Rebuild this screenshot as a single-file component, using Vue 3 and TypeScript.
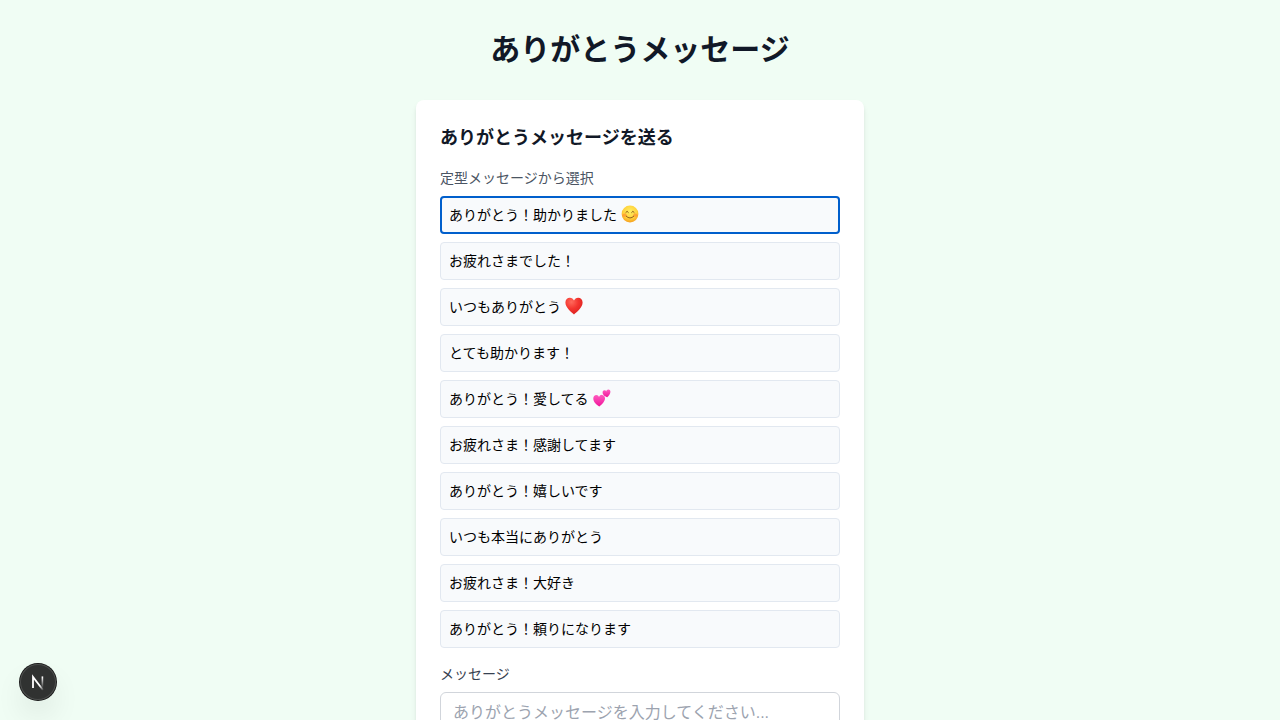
<script setup lang="ts">
import { ref } from 'vue'

type Emoji = 'smile' | 'heart' | 'hearts'

interface Preset {
  text: string
  emoji?: Emoji
}

const presets: Preset[] = [
  { text: 'ありがとう！助かりました', emoji: 'smile' },
  { text: 'お疲れさまでした！' },
  { text: 'いつもありがとう', emoji: 'heart' },
  { text: 'とても助かります！' },
  { text: 'ありがとう！愛してる', emoji: 'hearts' },
  { text: 'お疲れさま！感謝してます' },
  { text: 'ありがとう！嬉しいです' },
  { text: 'いつも本当にありがとう' },
  { text: 'お疲れさま！大好き' },
  { text: 'ありがとう！頼りになります' },
]

const selected = ref(0)
const message = ref('')

function choose(index: number) {
  selected.value = index
  message.value = presets[index].text
}
</script>

<template>
  <main class="page">
    <h1 class="title">ありがとうメッセージ</h1>

    <section class="card">
      <h2 class="heading">ありがとうメッセージを送る</h2>

      <p id="preset-label" class="hint">定型メッセージから選択</p>
      <div class="presets" role="group" aria-labelledby="preset-label">
        <button
          v-for="(preset, index) in presets"
          :key="preset.text"
          type="button"
          class="preset"
          :class="{ active: index === selected }"
          @click="choose(index)"
        >
          <span>{{ preset.text }}</span>
          <svg v-if="preset.emoji === 'smile'" class="emoji" viewBox="0 0 18 18" aria-hidden="true">
            <defs>
              <radialGradient id="face" cx="0.5" cy="0.35" r="0.68">
                <stop offset="0" stop-color="#ffee62" />
                <stop offset="0.6" stop-color="#ffd23c" />
                <stop offset="1" stop-color="#f59a1c" />
              </radialGradient>
            </defs>
            <circle cx="9" cy="9" r="8.4" fill="url(#face)" />
            <ellipse cx="3.6" cy="10.2" rx="2.2" ry="1.6" fill="#ff7a2e" opacity="0.5" />
            <ellipse cx="14.4" cy="10.2" rx="2.2" ry="1.6" fill="#ff7a2e" opacity="0.5" />
            <path d="M4.8 7.4Q6.1 4.9 7.4 7.4M10.6 7.4Q11.9 4.9 13.2 7.4" fill="none" stroke="#7a4a14" stroke-width="0.9" stroke-linecap="round" />
            <path d="M5.2 11.2Q9 15 12.8 11.2" fill="none" stroke="#86501a" stroke-width="0.9" stroke-linecap="round" />
          </svg>
          <svg v-else-if="preset.emoji === 'heart'" class="emoji" viewBox="0 0 18 18" aria-hidden="true">
            <defs>
              <radialGradient id="red" cx="0.35" cy="0.25" r="0.8">
                <stop offset="0" stop-color="#ff6a5c" />
                <stop offset="0.5" stop-color="#f4352f" />
                <stop offset="1" stop-color="#d91f1f" />
              </radialGradient>
            </defs>
            <path d="M9 17.6C6.8 15.2 .4 11 .4 5.5C.4 2.6 2.4 .7 4.8 .7C6.8 .7 8.3 1.8 9 3.6C9.7 1.8 11.2 .7 13.2 .7C15.6 .7 17.6 2.6 17.6 5.5C17.6 11 11.2 15.2 9 17.6Z" fill="url(#red)" />
          </svg>
          <svg v-else-if="preset.emoji === 'hearts'" class="emoji" viewBox="0 0 18 18" aria-hidden="true">
            <defs>
              <linearGradient id="pink" x1="0" y1="0" x2="0" y2="1">
                <stop offset="0" stop-color="#ff5cc0" />
                <stop offset="1" stop-color="#f0149a" />
              </linearGradient>
            </defs>
            <path d="M6.4 17.5C4.3 16.4 .3 13.4 .3 9.5C.3 7.3 1.6 5.9 3.3 5.9C4.7 5.9 5.6 6.7 6 7.9C6.7 6.5 7.9 5.7 9.3 5.9C11.2 6.1 12.2 7.7 12 9.7C11.6 13 8.4 15.8 6.4 17.5Z" fill="url(#pink)" />
            <path d="M14.2 8.2C12.6 7.6 9.6 6.3 9.6 3.5C9.6 2.1 10.4 1.3 11.5 1.3C12.4 1.3 12.9 1.8 13.2 2.5C13.5 1.3 14.3 .6 15.4 .6C16.8 .6 17.5 1.6 17.4 3C17.3 5.2 15.6 7 14.2 8.2Z" fill="url(#pink)" />
          </svg>
        </button>
      </div>

      <label class="label" for="message">メッセージ</label>
      <textarea
        id="message"
        v-model="message"
        class="message"
        rows="4"
        placeholder="ありがとうメッセージを入力してください..."
      ></textarea>
    </section>

    <button type="button" class="dev-badge" aria-label="Next.js">
      <svg viewBox="0 0 36 36" aria-hidden="true">
        <defs>
          <linearGradient id="diagonal" gradientUnits="userSpaceOnUse" x1="18" y1="18" x2="24" y2="26">
            <stop offset="0.4" stop-color="#fff" />
            <stop offset="1" stop-color="#fff" stop-opacity="0" />
          </linearGradient>
          <linearGradient id="stem" gradientUnits="userSpaceOnUse" x1="22" y1="13" x2="22" y2="24">
            <stop offset="0" stop-color="#fff" />
            <stop offset="1" stop-color="#fff" stop-opacity="0" />
          </linearGradient>
        </defs>
        <path d="M13 24V13L23 26" fill="none" stroke="url(#diagonal)" stroke-width="1.8" />
        <path d="M22.4 12.4V24" fill="none" stroke="url(#stem)" stroke-width="1.6" />
      </svg>
    </button>
  </main>
</template>

<style>
body {
  margin: 0;
  background: #f0fdf4;
}
</style>

<style scoped>
.page {
  box-sizing: border-box;
  min-height: 100vh;
  padding: 32px 16px;
  background: #f0fdf4;
  color: #111827;
  font-family: "Liberation Sans", "Noto Sans CJK JP", sans-serif;
}

.title {
  margin: 0 0 32px;
  font-size: 30px;
  line-height: 36px;
  font-weight: 700;
  text-align: center;
}

.card {
  box-sizing: border-box;
  max-width: 448px;
  margin: 0 auto;
  padding: 24px;
  border-radius: 8px;
  background: #fff;
  box-shadow: 0 4px 6px -1px rgba(0, 0, 0, 0.1), 0 2px 4px -2px rgba(0, 0, 0, 0.1);
}

.heading {
  margin: 0 0 16px;
  font-size: 18px;
  line-height: 28px;
  font-weight: 700;
}

.hint {
  margin: 0 0 8px;
  color: #4b5563;
  font-size: 14px;
  line-height: 20px;
}

.presets {
  display: grid;
  gap: 8px;
  margin-bottom: 16px;
}

.preset {
  display: flex;
  align-items: center;
  gap: 4px;
  width: 100%;
  padding: 8px;
  border: 1px solid #e2e8f0;
  border-radius: 4px;
  background: #f8fafc;
  color: #000;
  font-family: inherit;
  font-size: 14px;
  line-height: 20px;
  text-align: left;
  cursor: pointer;
}

.preset.active {
  outline: 2px solid #005fcc;
  outline-offset: -2px;
}

.emoji {
  flex: none;
  width: 18px;
  height: 18px;
  margin-bottom: 2px;
}

.label {
  display: block;
  margin-bottom: 8px;
  color: #374151;
  font-size: 14px;
  line-height: 20px;
}

.message {
  display: block;
  box-sizing: border-box;
  width: 100%;
  padding: 8px 12px;
  border: 1px solid #d1d5db;
  border-radius: 6px;
  background: #fff;
  color: #111827;
  font-family: inherit;
  font-size: 16px;
  line-height: 24px;
  resize: none;
}

.message::placeholder {
  color: #9ca3af;
  opacity: 1;
}

.dev-badge {
  position: fixed;
  bottom: 20px;
  left: 20px;
  width: 36px;
  height: 36px;
  padding: 0;
  border: 0;
  border-radius: 50%;
  background: #303231;
  box-shadow: 0 0 0 1px #171717, inset 0 0 0 1px #4c4e4d, 0 16px 32px -8px rgba(0, 0, 0, 0.24);
  cursor: pointer;
}

.dev-badge svg {
  display: block;
  width: 100%;
  height: 100%;
}
</style>
